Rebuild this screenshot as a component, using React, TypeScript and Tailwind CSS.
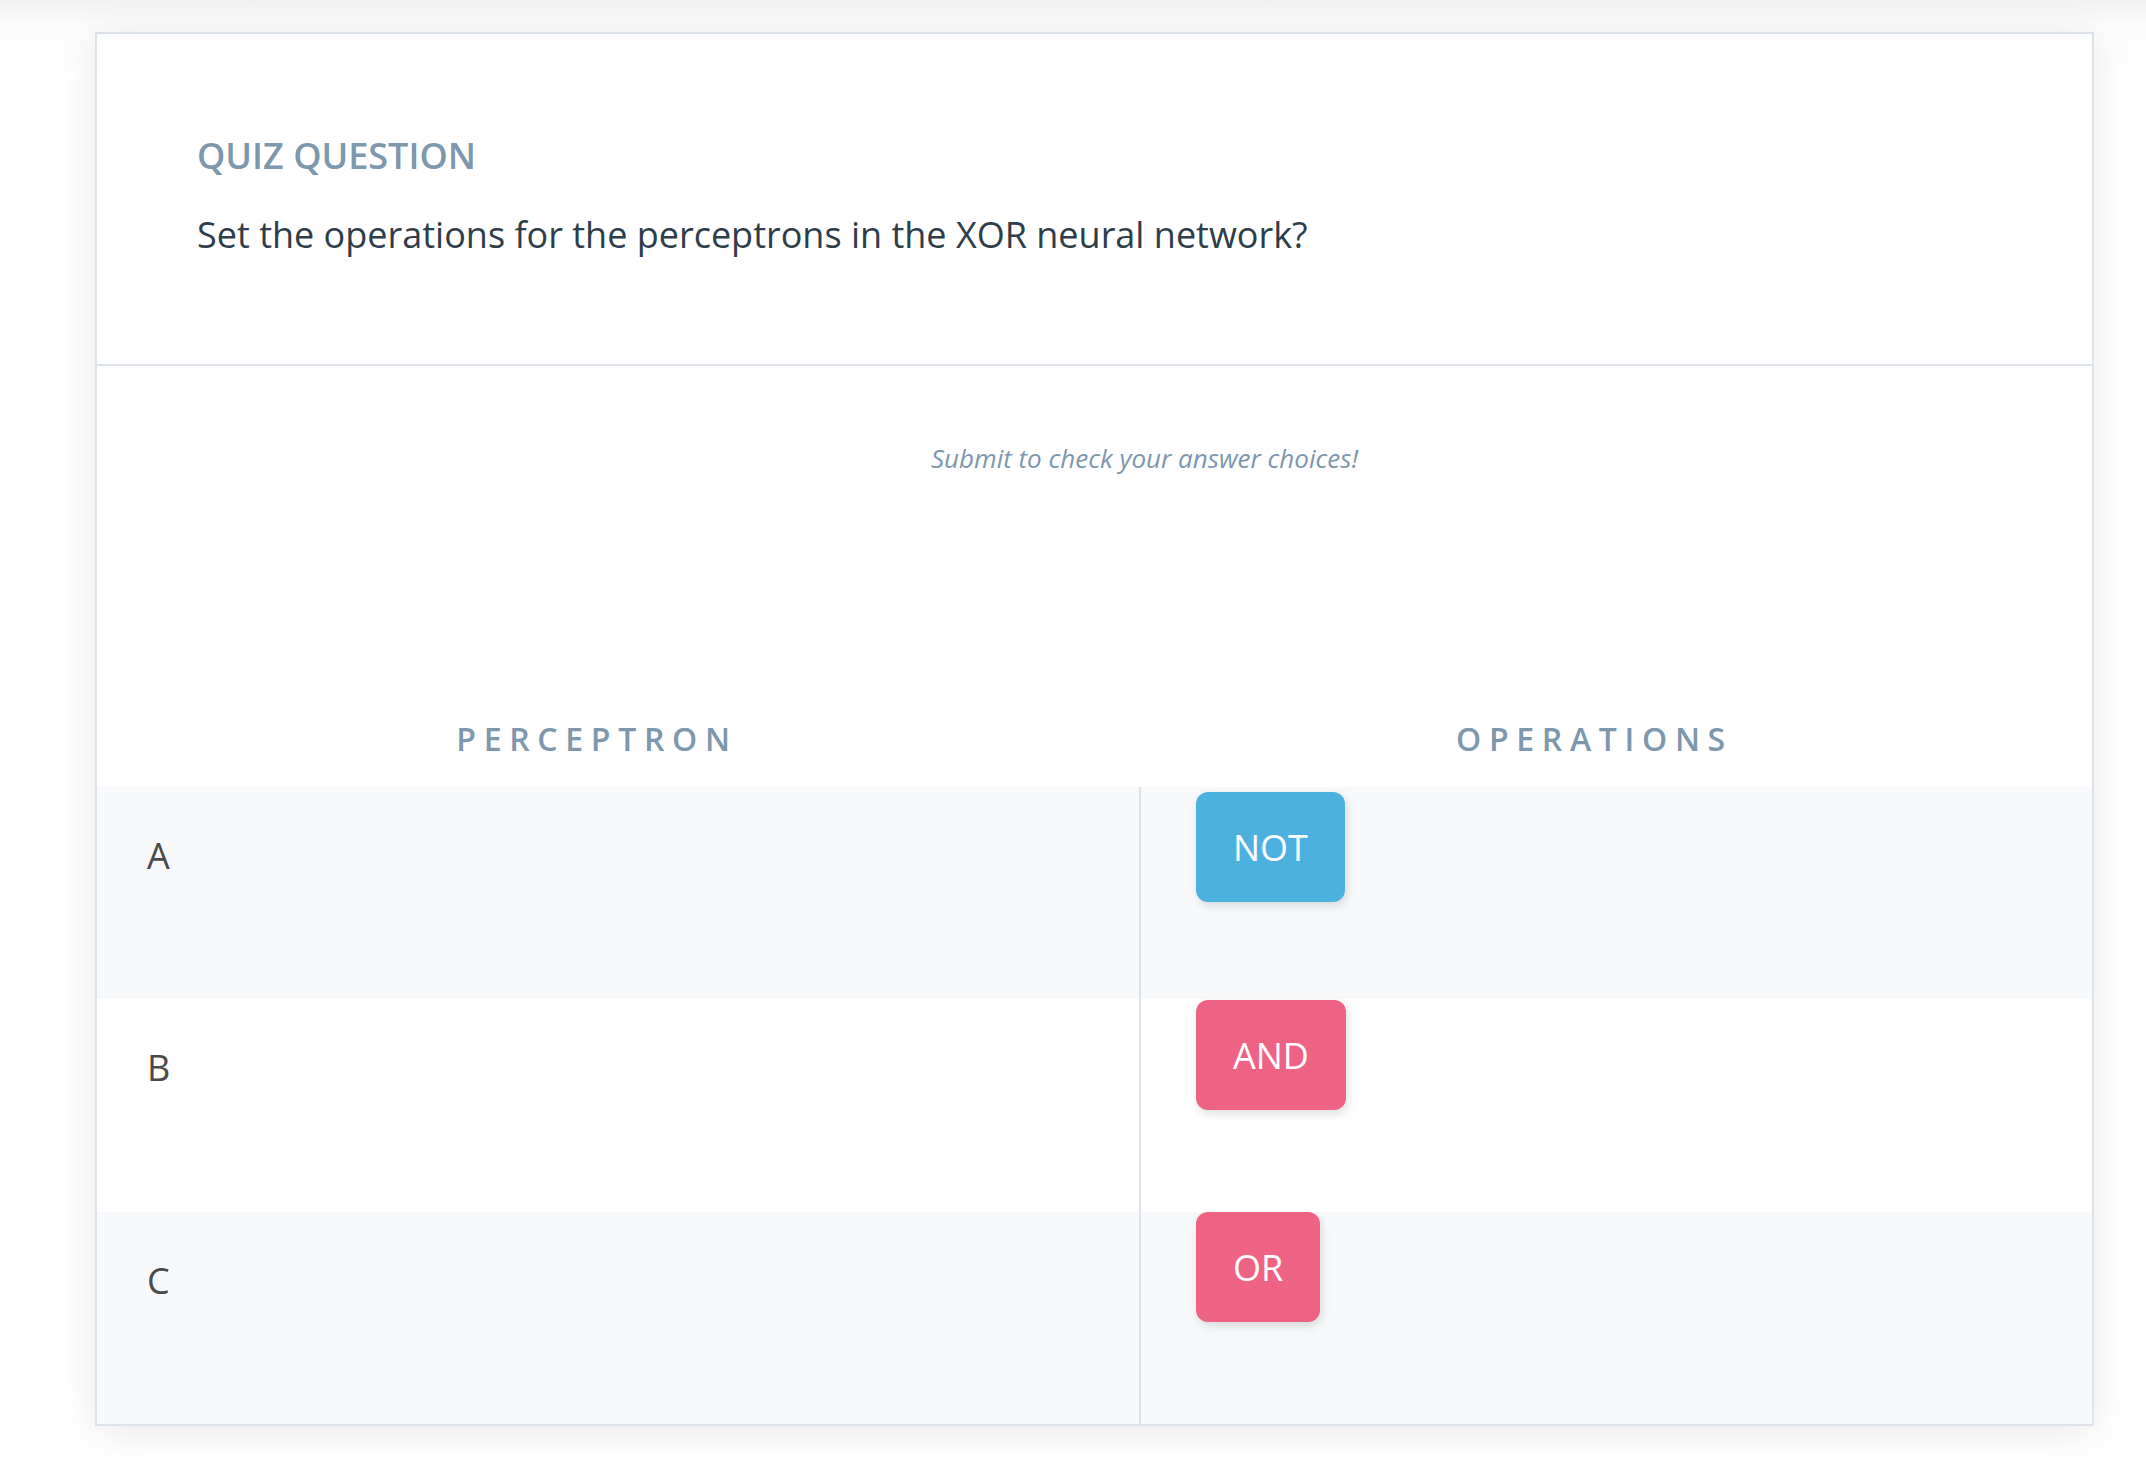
const filas = [
  { letra: 'A', op: 'NOT', color: 'bg-[#4db1e0]', fondo: 'bg-[#f8f9fb]', alto: 'h-[212px]', margen: 'mt-[5px]' },
  { letra: 'B', op: 'AND', color: 'bg-[#ee6284]', fondo: 'bg-white', alto: 'h-[213px]', margen: 'mt-[1px]' },
  { letra: 'C', op: 'OR', color: 'bg-[#ee6284]', fondo: 'bg-[#f8f9fb]', alto: 'h-[212px]', margen: 'mt-0' },
] as const

export default function App() {
  return (
    <div className="relative min-h-screen bg-white pt-[32px] font-['Open_Sans',sans-serif]">
      <div
        className="pointer-events-none absolute inset-x-0 top-0 z-10 h-[80px] bg-gradient-to-b from-black/[0.055] via-black/[0.012] via-30% to-transparent"
        aria-hidden
      />

      <div className="ml-[95px] w-[1999px] border-2 border-[#dde3e9] bg-white shadow-[0_6px_40px_rgba(0,0,0,0.09)]">
        <header className="h-[332px] border-b-2 border-[#dde3e9] pl-[100px] pt-[104px]">
          <p className="text-[36px] font-semibold leading-none text-[#7d97ad]">QUIZ QUESTION</p>
          <h1 className="mt-[43px] text-[36px] leading-none text-[#2e3d49]">
            Set the operations for the perceptrons in the XOR neural network?
          </h1>
        </header>

        <section className="pt-[79px]">
          <p className="pl-[100px] text-center text-[26px] italic leading-none text-[#7d97ad]">
            Submit to check your answer choices!
          </p>

          <div className="mt-[252px] grid grid-cols-[1044px_1fr] text-[32px] font-semibold leading-none tracking-[0.24em] text-[#7d97ad]">
            <div className="pr-[44px] text-center">PERCEPTRON</div>
            <div className="pr-[44px] text-center">OPERATIONS</div>
          </div>

          <div className="mt-[32px]">
            {filas.map(({ letra, op, color, fondo, alto, margen }) => (
              <div key={letra} className={`grid grid-cols-[1044px_1fr] ${fondo} ${alto}`}>
                <div className="border-r-2 border-[#dde3e9] pl-[50px] pt-[51px] text-[36px] leading-none text-[#4a4a4a]">
                  {letra}
                </div>
                <div className="pl-[55px]">
                  <button
                    className={`${margen} flex h-[110px] items-center rounded-[12px] px-[37px] pt-[2px] text-[36px] leading-none text-white shadow-[2px_4px_10px_rgba(0,0,0,0.13)] ${color}`}
                  >
                    {op}
                  </button>
                </div>
              </div>
            ))}
          </div>
        </section>
      </div>
    </div>
  )
}
